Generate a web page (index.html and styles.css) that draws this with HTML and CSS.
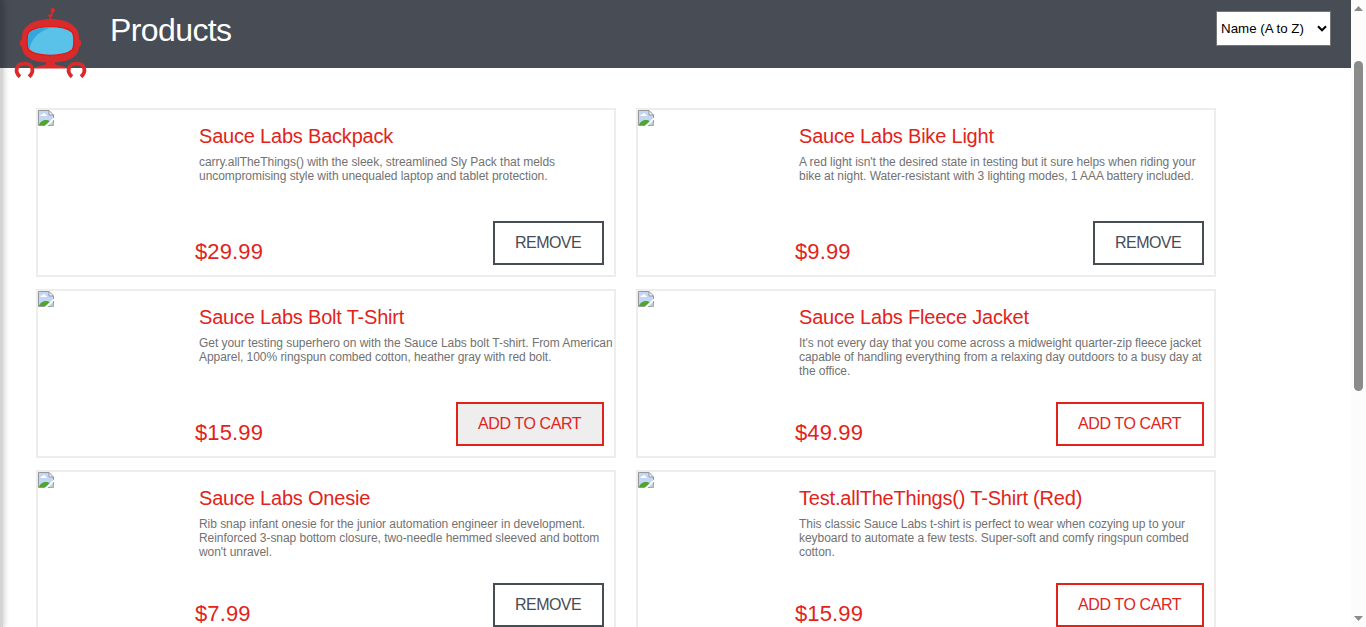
FILE: index.html
```
<!DOCTYPE html>
<html lang="en">
<head>
<meta charset="utf-8">
<title>Products</title>
<link rel="stylesheet" href="styles.css">
</head>
<body>
<svg class="sprite" aria-hidden="true">
  <symbol id="broken" viewBox="0 0 16 16">
    <path d="M.5.5h10.500l4.500 4.500v10.500H.5z" fill="#c4d6f5"/>
    <path d="M2.500 6c0-2 1.500-2 2-1.500C5 2.500 7.500 3 7.500 4.500 9 4.500 9 6 8.500 6z" fill="#fff"/>
    <path d="M1 15c1-3.500 4-5 7-5 2 0 3 .5 4 1.500L9 15z" fill="#4fa62f"/>
    <path d="M15.500 5v10.500H.5V.5H11" fill="none" stroke="#95979b"/>
    <path d="M11 .5V5h4.500z" fill="#f4f6fa" stroke="#95979b"/>
    <path d="M16 7.500v2L9.500 16H6.500z" fill="#fff"/>
    <path d="M12 15.500l3.500-3.500v3.500z" fill="#b6cdb5"/>
  </symbol>
</svg>
<div class="page">
  <main class="content">
    <header class="header">
      <svg class="robot" viewBox="0 0 72 72" aria-hidden="true">
        <path d="M37.500 12l-2.500-4.500 4 .5-2-1 2-4" fill="none" stroke="#d92b2b" stroke-width="1.600"/>
        <circle cx="38.800" cy="2.200" r="2.200" fill="#d92b2b"/>
        <path d="M32 52h9v4c3 2.500 10 1.500 13 4.500H19c3-3 10-2 13-4.500z" fill="#d92b2b"/>
        <path d="M36.500 11C52 11 65 17 65 29.500v2c1.500.5 2.200 1.500 2.200 3.500s-.7 3.500-2.200 4C65 49 54 54.500 36.500 54.500S8 49 8 39c-1.500-.5-2.200-2-2.200-4s.7-3 2.200-3.500v-2C8 17 21 11 36.500 11z" fill="#d92b2b"/>
        <path d="M36.500 18.700c9 0 17.500 1.800 21.500 5.300 2.500 3 2.500 15 0 18-4 3.500-12.500 5.300-21.500 5.300S19 45.500 15 42c-2.500-3-2.500-15 0-18 4-3.500 12.500-5.300 21.500-5.300z" fill="#5ac2e9" stroke="#e4170f" stroke-width="1.300"/>
        <path d="M37 19.500C25 23 16.500 31 15.500 41.500c-2-3-2-14 0-17C19 21 28 19.500 37 19.500z" fill="#35a5dc"/>
        <g fill="none" stroke="#d92b2b" stroke-width="3.800">
          <path d="M6 68.700C.5 64 1.500 55.700 10.500 55.700S20.500 64 15 68.700"/>
          <path d="M58 68.700C52.500 64 53.500 55.700 62.500 55.700S72.500 64 67 68.700"/>
        </g>
      </svg>
      <h1 class="title">Products</h1>
      <div class="sort"><span>Name (A to Z)</span>
        <svg class="sort-arrow" viewBox="0 0 10 7"><path d="M1 1.300l4 4 4-4" fill="none" stroke="#000" stroke-width="2"/></svg>
      </div>
    </header>
    <section class="inventory">
      <article class="card">
        <svg class="thumb"><use href="#broken"/></svg>
        <div class="info">
          <h2 class="name">Sauce Labs Backpack</h2>
          <p class="desc">carry.allTheThings() with the sleek, streamlined Sly Pack that melds<br>uncompromising style with unequaled laptop and tablet protection.</p>
          <div class="buy"><span class="price">$29.99</span><button class="btn btn-remove">REMOVE</button></div>
        </div>
      </article>
      <article class="card">
        <svg class="thumb"><use href="#broken"/></svg>
        <div class="info">
          <h2 class="name">Sauce Labs Bike Light</h2>
          <p class="desc">A red light isn't the desired state in testing but it sure helps when riding your<br>bike at night. Water-resistant with 3 lighting modes, 1 AAA battery included.</p>
          <div class="buy"><span class="price">$9.99</span><button class="btn btn-remove">REMOVE</button></div>
        </div>
      </article>
      <article class="card">
        <svg class="thumb"><use href="#broken"/></svg>
        <div class="info">
          <h2 class="name">Sauce Labs Bolt T-Shirt</h2>
          <p class="desc">Get your testing superhero on with the Sauce Labs bolt T-shirt. From American<br>Apparel, 100% ringspun combed cotton, heather gray with red bolt.</p>
          <div class="buy"><span class="price">$15.99</span><button class="btn btn-add btn-hover">ADD TO CART</button></div>
        </div>
      </article>
      <article class="card">
        <svg class="thumb"><use href="#broken"/></svg>
        <div class="info">
          <h2 class="name">Sauce Labs Fleece Jacket</h2>
          <p class="desc">It's not every day that you come across a midweight quarter-zip fleece jacket<br>capable of handling everything from a relaxing day outdoors to a busy day at<br>the office.</p>
          <div class="buy"><span class="price">$49.99</span><button class="btn btn-add">ADD TO CART</button></div>
        </div>
      </article>
      <article class="card">
        <svg class="thumb"><use href="#broken"/></svg>
        <div class="info">
          <h2 class="name">Sauce Labs Onesie</h2>
          <p class="desc">Rib snap infant onesie for the junior automation engineer in development.<br>Reinforced 3-snap bottom closure, two-needle hemmed sleeved and bottom<br>won't unravel.</p>
          <div class="buy"><span class="price">$7.99</span><button class="btn btn-remove">REMOVE</button></div>
        </div>
      </article>
      <article class="card">
        <svg class="thumb"><use href="#broken"/></svg>
        <div class="info">
          <h2 class="name">Test.allTheThings() T-Shirt (Red)</h2>
          <p class="desc">This classic Sauce Labs t-shirt is perfect to wear when cozying up to your<br>keyboard to automate a few tests. Super-soft and comfy ringspun combed<br>cotton.</p>
          <div class="buy"><span class="price">$15.99</span><button class="btn btn-add">ADD TO CART</button></div>
        </div>
      </article>
    </section>
  </main>
  <div class="scrollbar">
    <svg class="arrow" viewBox="0 0 9 5"><path d="M0 5h9L4.500 0z" fill="#8b8b8b"/></svg>
    <div class="thumb-bar"></div>
    <svg class="arrow" viewBox="0 0 9 5"><path d="M0 0h9L4.500 5z" fill="#8b8b8b"/></svg>
  </div>
  <div class="menu-shadow"></div>
</div>
</body>
</html>
```
FILE: styles.css
```
* { box-sizing: border-box; }
body {
  margin: 0;
  background: #fff;
  font-family: "Liberation Sans", Arial, sans-serif;
}
.sprite { display: none; }
.page {
  position: relative;
  display: flex;
  height: 627px;
  overflow: hidden;
}
.content { flex: 1; min-width: 0; }
.header {
  display: flex;
  align-items: flex-start;
  height: 68px;
  padding: 8px 20px 0 14px;
  background: #474c55;
}
.robot { flex: none; width: 72px; height: 72px; overflow: visible; }
.title {
  margin: 4px 0 0 24px;
  color: #fff;
  font-size: 32px;
  font-weight: 400;
  line-height: 36px;
  letter-spacing: -0.6px;
}
.sort {
  display: flex;
  align-items: center;
  justify-content: space-between;
  width: 115px;
  height: 35px;
  margin: 3px 0 0 auto;
  padding: 0 3px 0 4px;
  border: 1px solid #767676;
  background: #fff;
  color: #000;
  font-size: 13.333px;
  white-space: nowrap;
}
.sort-arrow { width: 10px; height: 7px; }
.inventory {
  display: grid;
  grid-template-columns: 580px 580px;
  grid-auto-rows: 169px;
  gap: 12px 20px;
  padding: 40px 0 0 36px;
}
.card { display: flex; border: 2px solid #ededed; }
.thumb { flex: none; width: 16px; height: 16px; margin-right: 141px; }
.info { display: flex; flex: 1; flex-direction: column; min-width: 0; padding: 14px 10px 10px 0; }
.name {
  margin: 0 0 7px 4px;
  color: #e2231a;
  font-size: 20px;
  font-weight: 400;
  line-height: 24px;
  letter-spacing: -0.2px;
}
.desc {
  margin: 0 0 0 4px;
  color: #727272;
  font-size: 12px;
  line-height: 14px;
  letter-spacing: -0.048px;
  white-space: nowrap;
}
.buy {
  display: flex;
  align-items: flex-end;
  justify-content: space-between;
  margin-top: auto;
}
.price { color: #e2231a; font-size: 22px; line-height: 26px; letter-spacing: 0.12px; }
.btn {
  height: 44px;
  padding: 0 20px;
  border: 2px solid;
  background: #fff;
  font: 16px "Liberation Sans", Arial, sans-serif;
  text-align: left;
  white-space: nowrap;
}
.btn-remove { width: 111px; color: #474c55; letter-spacing: -0.55px; }
.btn-add { width: 148px; color: #e2231a; letter-spacing: -0.4px; }
.btn-hover { background: #eee; }
.scrollbar {
  display: flex;
  flex: none;
  flex-direction: column;
  align-items: center;
  width: 15px;
  padding: 6px 0;
  background: #fcfcfc;
}
.arrow { width: 9px; height: 5px; }
.thumb-bar {
  width: 9px;
  height: 330px;
  margin: 50px 0 auto;
  border-radius: 5px;
  background: #8b8b8b;
}
/* Edge of the collapsed side menu, which sits left of the viewport */
.menu-shadow {
  position: absolute;
  top: 0;
  bottom: 0;
  left: -17px;
  width: 20px;
  box-shadow: 0 0 6px 1px rgba(0, 0, 0, 0.2);
  background: rgba(0, 0, 0, 0.17);
}
```
